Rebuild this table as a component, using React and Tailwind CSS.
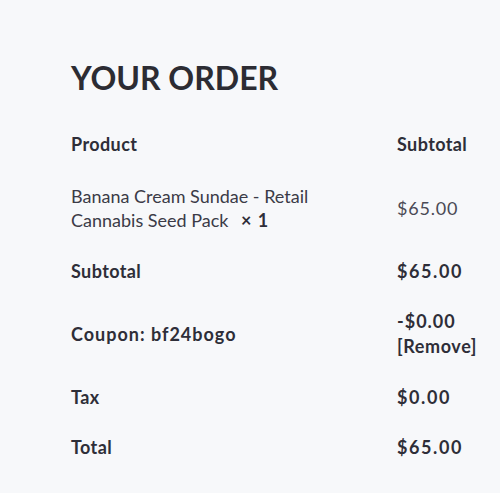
export default function App() {
  return (
    <div className="min-h-[493px] w-[500px] bg-[#f7f8fa] text-[#2e2e38]" style={{ fontFamily: 'Lato, "Open Sans", sans-serif' }}>
      <div className="pl-[71px] pr-[12px] pt-[58px]">
        <h2 className="text-[32px] font-bold leading-[40px] text-[#2c2c33]">YOUR ORDER</h2>
        <table className="mt-[20px] w-full border-collapse text-[18px]">
          <thead>
            <tr>
              <th className="py-[14px] text-left font-bold leading-6 tracking-[0.4px]">Product</th>
              <th className="w-[91px] py-[14px] text-left font-bold leading-6 tracking-[0.4px]">Subtotal</th>
            </tr>
          </thead>
          <tbody>
            <tr>
              <td className="py-[14px] leading-6 text-[#3b3b47]">
                Banana Cream Sundae - Retail
                <br />
                Cannabis Seed Pack <strong className="ml-2 font-bold tracking-[1px] text-[#2e2e38]">× 1</strong>
              </td>
              <td className="py-[14px] leading-6 tracking-[0.8px] text-[#4a4a55]">$65.00</td>
            </tr>
            <tr>
              <th className="py-[13px] text-left font-bold leading-6 tracking-[0.4px]">Subtotal</th>
              <td className="py-[13px] font-bold leading-6 tracking-[1.6px]">$65.00</td>
            </tr>
            <tr>
              <th className="py-[13px] text-left font-bold leading-6 tracking-[1px]">Coupon: bf24bogo</th>
              <td className="py-[13px] font-bold leading-[25px] tracking-[1px]">
                -$0.00
                <br />
                <a className="tracking-[0.6px] text-[#2e2e38]">[Remove]</a>
              </td>
            </tr>
            <tr>
              <th className="py-[13px] text-left font-bold leading-6 tracking-[0.4px]">Tax</th>
              <td className="py-[13px] font-bold leading-6 tracking-[1.6px]">$0.00</td>
            </tr>
            <tr>
              <th className="py-[13px] text-left font-bold leading-6 tracking-[0.4px]">Total</th>
              <td className="py-[13px] font-bold leading-6 tracking-[1.6px]">$65.00</td>
            </tr>
          </tbody>
        </table>
      </div>
    </div>
  )
}
